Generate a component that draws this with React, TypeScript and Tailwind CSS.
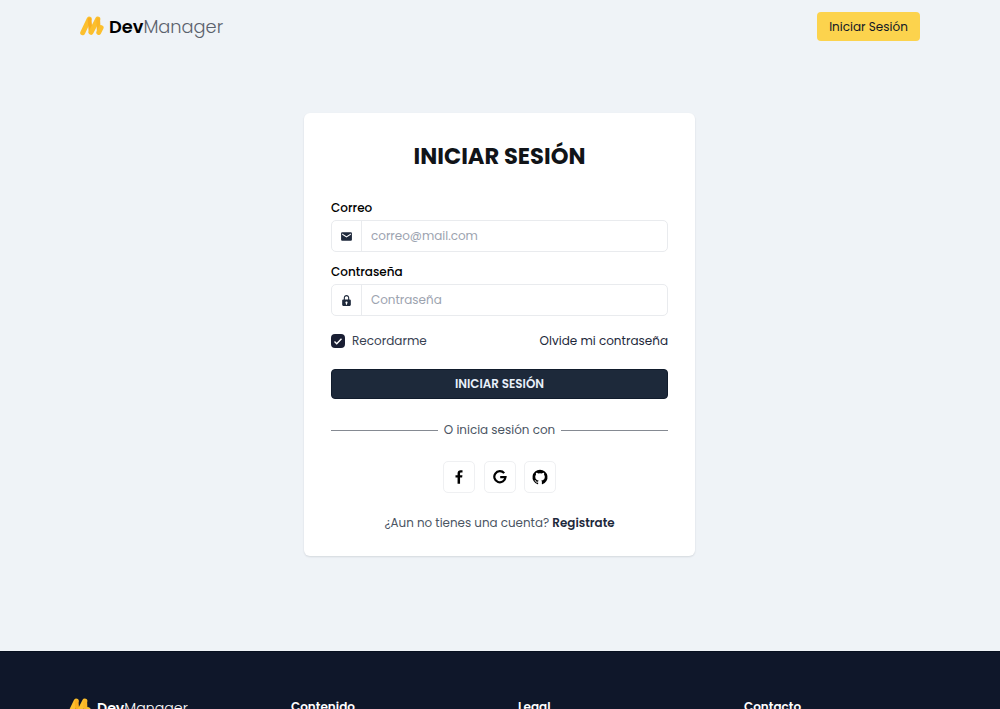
import type { ReactNode } from "react";
import { BiLogoFacebook, BiSolidEnvelope, BiSolidLock } from "react-icons/bi";

function LogoMark({ className }: { className: string }) {
  return (
    <svg viewBox="0 0 24 20" fill="none" strokeLinecap="round" className={className}>
      <path d="M2.7 16.7 9.2 3" stroke="#fcbf2d" strokeWidth="5" />
      <path d="M9.6 3.6 10.6 16" stroke="#f9ae20" strokeWidth="3.8" />
      <path d="M11 16.3 17.8 3" stroke="#fcbf2d" strokeWidth="5" />
      <path d="M18.2 3.6 18.8 16" stroke="#fab626" strokeWidth="3.8" />
      <path d="M18.7 16.6 21.2 11.6" stroke="#fcbf2d" strokeWidth="4.8" />
    </svg>
  );
}

function GoogleIcon() {
  return (
    <svg viewBox="0 0 14 14" fill="none" stroke="currentColor" strokeWidth="2.2" className="size-[14px]">
      <path d="M11.2 3.1A5.6 5.6 0 1 0 12.5 7.2H7.2" />
    </svg>
  );
}

function GithubIcon() {
  return (
    <svg viewBox="0 0 24 24" fill="currentColor" className="size-[18px]">
      <path d="M12,2.2467A10.00042,10.00042,0,0,0,8.83752,21.73419c.5.08752.6875-.21247.6875-.475,0-.23749-.01251-1.025-.01251-1.86249C7,19.85919,6.35,18.78423,6.15,18.22173A3.636,3.636,0,0,0,5.125,16.8092c-.35-.1875-.85-.65-.01251-.66248A2.00117,2.00117,0,0,1,6.65,17.17169a2.13742,2.13742,0,0,0,2.91248.825A2.10376,2.10376,0,0,1,10.2,16.65923c-2.225-.25-4.55-1.11254-4.55-4.9375a3.89187,3.89187,0,0,1,1.025-2.6875,3.59373,3.59373,0,0,1,.1-2.65s.83747-.26251,2.75,1.025a9.42747,9.42747,0,0,1,5,0c1.91248-1.3,2.75-1.025,2.75-1.025a3.59323,3.59323,0,0,1,.1,2.65,3.869,3.869,0,0,1,1.025,2.6875c0,3.83747-2.33752,4.6875-4.5625,4.9375a2.36814,2.36814,0,0,1,.675,1.85c0,1.33752-.01251,2.41248-.01251,2.75,0,.26251.1875.575.6875.475A10.0053,10.0053,0,0,0,12,2.2467Z" />
    </svg>
  );
}

function Field({ label, icon, type, placeholder }: { label: string; icon: ReactNode; type: string; placeholder: string }) {
  return (
    <label className="block">
      <span className="block h-[24px] text-[12px] leading-[24px] font-medium text-black">{label}</span>
      <span className="flex h-[32px] overflow-hidden rounded-[5px] border border-[#e9ebee] bg-white">
        <span className="flex w-[30px] items-center justify-center border-r border-[#e9ebee] text-[#1e293b]">{icon}</span>
        <input
          type={type}
          placeholder={placeholder}
          className="min-w-0 flex-1 px-[9px] text-[11.95px] outline-none placeholder:text-[#9ca3af]"
        />
      </span>
    </label>
  );
}

function SocialButton({ children }: { children: ReactNode }) {
  return (
    <button className="flex h-[32px] w-[32px] items-center justify-center rounded-[5px] border border-[#eff0f2] bg-white pb-px text-black">
      {children}
    </button>
  );
}

export default function App() {
  return (
    <div className="flex h-[709px] flex-col overflow-hidden bg-[#eff3f7] font-['Poppins','Inter',sans-serif]">
      <header className="flex h-[53px] shrink-0 items-center justify-between px-[80px]">
        <div className="flex items-center">
          <LogoMark className="mb-[2px] h-[20px] w-[24px]" />
          <div className="ml-[5px] text-[17.8px] leading-[28px] text-black">
            <span className="font-semibold">Dev</span>
            <span className="font-light text-[#5a616c]">Manager</span>
          </div>
        </div>
        <button className="h-[29px] w-[103px] rounded-[4px] bg-[#fcd34d] text-[12px] whitespace-nowrap text-[#111827]">
          Iniciar Sesión
        </button>
      </header>

      <main className="flex h-[598px] shrink-0 justify-center pt-[60px] pr-px">
        <section className="h-[443px] w-[391px] rounded-[6px] bg-white px-[27px] pt-[26px] shadow-[0_1px_2px_rgba(15,23,42,0.12)]">
          <h1 className="text-center text-[22.6px] leading-[35px] font-bold whitespace-nowrap text-[#111418]">INICIAR SESIÓN</h1>
          <form className="mt-[22px]">
            <Field label="Correo" type="email" placeholder="correo@mail.com" icon={<BiSolidEnvelope className="size-[13px]" />} />
            <div className="mt-[8px]">
              <Field label="Contraseña" type="password" placeholder="Contraseña" icon={<BiSolidLock className="size-[13px]" />} />
            </div>
            <div className="mt-[15px] flex h-[20px] items-center justify-between text-[12px] text-[#374151]">
              <label className="flex items-center gap-[7px]">
                <span className="flex size-[14px] items-center justify-center rounded-[4px] bg-[#191e33]">
                  <svg viewBox="0 0 14 14" className="size-[14px]" fill="none" stroke="white" strokeWidth="1.4">
                    <path d="m3.5 7.6 2.2 2.2 4.8-5" />
                  </svg>
                </span>
                <span>Recordarme</span>
              </label>
              <a className="text-[#1e293b]">Olvide mi contraseña</a>
            </div>
            <button type="button" className="mt-[18px] h-[30px] w-full rounded-[4px] border border-[#111c2c] bg-[#1d293a] text-[11.9px] font-semibold text-[#e8f0fa]">
              <span className="block leading-[28px]">INICIAR SESIÓN</span>
            </button>
          </form>
          <div className="mt-[21px] flex h-[20px] items-center gap-[6px] text-[11.95px] whitespace-nowrap text-[#4b5563]">
            <span className="h-px flex-1 bg-[#858a92]" />
            <span>O inicia sesión con</span>
            <span className="h-px flex-1 bg-[#858a92]" />
          </div>
          <div className="mt-[21px] flex gap-[8.5px] pl-[112px]">
            <SocialButton><BiLogoFacebook className="size-[18px]" /></SocialButton>
            <SocialButton><GoogleIcon /></SocialButton>
            <SocialButton><GithubIcon /></SocialButton>
          </div>
          <p className="mt-[20px] text-center text-[11.9px] leading-[20px] whitespace-nowrap text-[#4b5563]">
            <span>¿Aun no tienes una cuenta? </span>
            <a className="font-semibold text-[#1e293b]">Registrate</a>
          </p>
        </section>
      </main>

      <footer className="grid h-[120px] shrink-0 grid-cols-[224px_227px_226px_1fr] border-t border-[#07101f] bg-[#0f172a] pt-[45px] pl-[67px] text-white">
        <div className="flex h-[20px] items-center">
          <LogoMark className="mt-px h-[20px] w-[24px]" />
          <div className="ml-[6px] pt-[2px] text-[14.15px] leading-[20px]">
            <span className="font-semibold">Dev</span>
            <span className="font-light">Manager</span>
          </div>
        </div>
        <h2 className="text-[12px] leading-[20px] font-semibold">Contenido</h2>
        <h2 className="text-[12px] leading-[20px] font-semibold">Legal</h2>
        <h2 className="text-[12px] leading-[20px] font-semibold">Contacto</h2>
      </footer>
    </div>
  );
}
